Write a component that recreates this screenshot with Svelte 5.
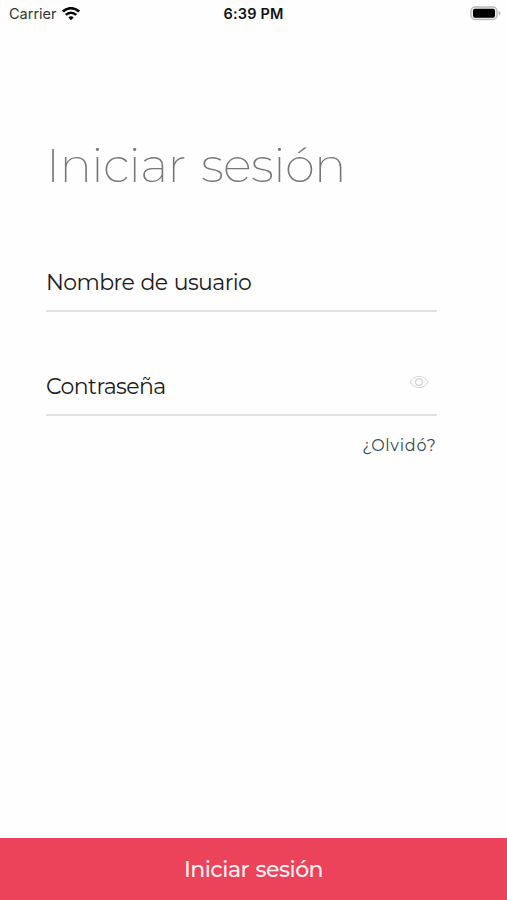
<script>
  let username = $state('Nombre de usuario');
</script>

<div class="screen">
  <header class="status">
    <div class="carrier">
      <span>Carrier</span>
      <svg width="18" height="14" viewBox="0 0 18 14" fill="none" stroke="#050505" stroke-width="2.7">
        <path d="M.9 4.6a11.5 11.5 0 0 1 16.2 0" />
        <path d="M3.8 7.9a7.4 7.4 0 0 1 10.4 0" />
        <path d="M9 13.2 6.3 10.5a3.8 3.8 0 0 1 5.4 0Z" fill="#050505" stroke="none" />
      </svg>
    </div>
    <span class="time">6:39 PM</span>
    <svg class="battery" width="31" height="16" viewBox="0 0 31 16">
      <rect x="1" y="1" width="26" height="12.5" rx="4" fill="#eee" stroke="#bcbcbc" stroke-width="1.4" />
      <rect x="3" y="2.8" width="22" height="9" rx="2" fill="#000" />
      <path d="M28.5 5q2 .8 2 2.3t-2 2.3z" fill="#bcbcbc" />
    </svg>
  </header>

  <main>
    <h1>Iniciar sesión</h1>
    <div class="field"><span class="name">{username}</span></div>
    <div class="field second">
      <span class="pass">Contraseña</span>
      <svg class="eye" width="20" height="14" viewBox="0 0 20 14" fill="none" stroke="#d6d6d6">
        <path d="M1 7C5-.6 15-.6 19 7 15 14.4 5 14.4 1 7Z" />
        <circle cx="10" cy="7" r="3.4" stroke-width="1.3" />
      </svg>
    </div>
    <a class="forgot" href="#forgot">¿Olvidó?</a>
  </main>

  <button>Iniciar sesión</button>
</div>

<style>
  :global(body) { background: #fff; }
  .screen {
    height: 900px;
    display: flex;
    flex-direction: column;
    background: #fefefe;
    font-family: Montserrat, Inter, "Open Sans", sans-serif;
    overflow: hidden;
  }
  .status {
    height: 27px;
    display: grid;
    grid-template-columns: 1fr auto 1fr;
    align-items: center;
    padding: 0 6px 0 9px;
    font: 14.5px/27px Inter, sans-serif;
    color: #333;
  }
  .carrier { display: flex; align-items: center; gap: 5px; }
  .time { font-weight: 600; color: #111; letter-spacing: .15px; margin-right: 3px; }
  .battery { justify-self: end; }
  main {
    flex: 1;
    display: flex;
    flex-direction: column;
    padding: 108px 70px 0 46px;
  }
  h1 {
    margin: 0;
    font-size: 48.5px;
    line-height: 60px;
    font-weight: 220;
    letter-spacing: -.65px;
    word-spacing: 3.5px;
    color: #777;
    white-space: nowrap;
  }
  .field {
    height: 61px;
    box-sizing: border-box;
    margin-top: 56px;
    border-bottom: 2px solid #e2e2e2;
    display: flex;
    justify-content: space-between;
    align-items: flex-start;
    font-size: 22px;
    line-height: 64px;
    letter-spacing: -.58px;
    word-spacing: 1px;
    color: #1c1c1c;
  }
  .second { margin-top: 43px; }
  .eye { margin: 20px 8.5px 0 0; }
  .forgot {
    align-self: flex-end;
    margin-top: 17px;
    margin-right: .5px;
    font-size: 16px;
    line-height: 26px;
    letter-spacing: .75px;
    color: #304a58;
    text-decoration: none;
  }
  button {
    height: 62px;
    border: 0;
    padding: 2px 0 0;
    background: #eb435a;
    color: #fff0f0;
    font: 500 22px/60px Montserrat, Inter, sans-serif;
    letter-spacing: -.5px;
    word-spacing: 1px;
  }
</style>
